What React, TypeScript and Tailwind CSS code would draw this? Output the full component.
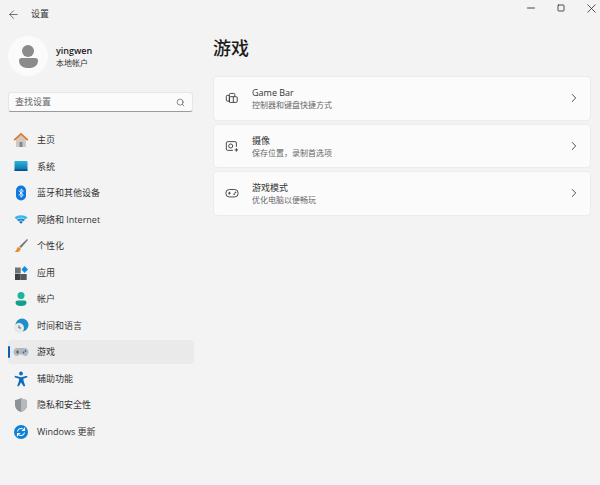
import type { ReactNode } from 'react';
import { ArrowLeft, ChevronRight, Minus, Search, Square, X } from 'lucide-react';

const font = { fontFamily: '"Open Sans", "Noto Sans CJK SC", sans-serif' };

function HomeIcon() {
  return (
    <svg width="16" height="16" viewBox="0 0 16 16">
      <path d="M3 7.5 8 3l5 4.500V15H3z" fill="#cfc9c4" />
      <rect x="6.500" y="10" width="3" height="5" fill="#8a8582" />
      <path d="M1.200 8.200 8 1.800l6.800 6.400" fill="none" stroke="#d9782d" strokeWidth="1.700" />
    </svg>
  );
}

function SystemIcon() {
  return (
    <svg width="16" height="16" viewBox="0 0 16 16">
      <defs>
        <linearGradient id="sys" x1="0" y1="0" x2="0" y2="1">
          <stop offset="0" stopColor="#2bb6d8" />
          <stop offset="1" stopColor="#0a6fb0" />
        </linearGradient>
      </defs>
      <rect x="1.500" y="3" width="13" height="9.500" rx="0.800" fill="url(#sys)" />
      <rect x="1.500" y="11.500" width="13" height="1.500" fill="#0b4f83" />
    </svg>
  );
}

function BluetoothIcon() {
  return (
    <svg width="16" height="16" viewBox="0 0 16 16">
      <rect x="3" y="0.500" width="10" height="15" rx="5" fill="#0a78e0" />
      <path d="M5.600 5.400 10.300 10 8 12.200V3.800L10.300 6 5.600 10.600" fill="none" stroke="#fff" strokeWidth="0.900" />
    </svg>
  );
}

function WifiIcon() {
  return (
    <svg width="16" height="16" viewBox="0 0 16 16">
      <path d="M1.500 6.500C5 3.400 11 3.400 14.500 6.500L12.600 8.300C10 6.200 6 6.200 3.400 8.300z" fill="#38b6e8" />
      <path d="M3.900 8.800C6.200 7 9.800 7 12.100 8.800L10.500 10.300C9 9.300 7 9.300 5.500 10.300z" fill="#1588d6" />
      <path d="M6 10.800C7.200 10 8.800 10 10 10.800L8 12.800z" fill="#0a5fb4" />
    </svg>
  );
}

function BrushIcon() {
  return (
    <svg width="16" height="16" viewBox="0 0 16 16">
      <path d="M14 1 15 2 8 10 6.300 8.400z" fill="#77797c" />
      <path d="M5.800 9c-2 .4-2 2.400-2.600 3.400-.4.700-1 1.100-1.700 1.400 2.400.8 5.400.2 6.300-3.100z" fill="#ea8a25" />
    </svg>
  );
}

function AppsIcon() {
  return (
    <svg width="16" height="16" viewBox="0 0 16 16">
      <rect x="2" y="2.500" width="5.700" height="6" fill="#6f7478" />
      <rect x="2" y="9" width="5.700" height="6" fill="#3c4044" />
      <rect x="8" y="9" width="5.700" height="6" fill="#55595d" />
      <path d="M11.500 1 15 4.500 11.500 8 8.500 4.500z" fill="#0f8fe0" />
    </svg>
  );
}

function AccountIcon() {
  return (
    <svg width="16" height="16" viewBox="0 0 16 16">
      <circle cx="8" cy="4.500" r="3.500" fill="#1fb39c" />
      <path d="M2.500 11.500c0-1.300 1-2 2-2h7c1 0 2 .7 2 2 0 2.500-2.500 3.500-5.500 3.500s-5.500-1-5.500-3.500z" fill="#14a08f" />
    </svg>
  );
}

function TimeIcon() {
  return (
    <svg width="16" height="16" viewBox="0 0 16 16">
      <circle cx="9" cy="7" r="6.500" fill="#1f8fc9" />
      <circle cx="6" cy="10" r="5" fill="#e6e8ea" />
      <path d="M6 7.500V10h2" fill="none" stroke="#4a5a68" strokeWidth="0.900" />
    </svg>
  );
}

function GameIcon() {
  return (
    <svg width="16" height="16" viewBox="0 0 16 16">
      <path d="M4 4h8c2 0 3.500 1.700 3.500 4s-1.500 4-3.500 4c-1 0-1.700-1-2.500-1.500h-3C5.700 11 5 12 4 12 2 12 .5 10.300 .5 8S2 4 4 4z" fill="#b4b8bc" />
      <path d="M3 8h3M4.500 6.500v3" stroke="#4b4f53" strokeWidth="0.900" />
      <circle cx="10.500" cy="8.500" r="0.900" fill="#2a6fc0" />
      <circle cx="12.500" cy="7" r="0.900" fill="#2a6fc0" />
    </svg>
  );
}

function AccessIcon() {
  return (
    <svg width="16" height="16" viewBox="0 0 16 16">
      <circle cx="8" cy="2.500" r="1.900" fill="#0f6cbd" />
      <path d="M2 4.800 8 6.200l6-1.400.5 1.400-4.200 1.500.5 3 1.500 4.300-1.500.5L8 11.500l-2.300 4-1.500-.5 1.500-4.300.5-3L1.500 6.200z" fill="#0f6cbd" />
    </svg>
  );
}

function ShieldIcon() {
  return (
    <svg width="16" height="16" viewBox="0 0 16 16">
      <path d="M8 1c1.800 1.200 3.800 1.800 6 2v5c0 3.400-2.400 5.800-6 7-3.600-1.200-6-3.600-6-7V3c2.200-.2 4.200-.8 6-2z" fill="#8d9297" />
      <path d="M8 1c1.800 1.200 3.800 1.800 6 2v5c0 3.400-2.400 5.800-6 7z" fill="#b5b9bd" />
    </svg>
  );
}

function UpdateIcon() {
  return (
    <svg width="16" height="16" viewBox="0 0 16 16">
      <circle cx="8" cy="8" r="7" fill="#0f80d6" />
      <path d="M4.500 7.500A3.600 3.600 0 0 1 11 6M11.500 8.500A3.600 3.600 0 0 1 5 10" fill="none" stroke="#fff" strokeWidth="1.100" />
      <path d="M11.500 3.800V6.500H8.800M4.500 12.200V9.500H7.200" fill="none" stroke="#fff" strokeWidth="1.100" />
    </svg>
  );
}

const navItems: { label: string; icon: ReactNode; active?: boolean }[] = [
  { label: '主页', icon: <HomeIcon /> },
  { label: '系统', icon: <SystemIcon /> },
  { label: '蓝牙和其他设备', icon: <BluetoothIcon /> },
  { label: '网络和 Internet', icon: <WifiIcon /> },
  { label: '个性化', icon: <BrushIcon /> },
  { label: '应用', icon: <AppsIcon /> },
  { label: '帐户', icon: <AccountIcon /> },
  { label: '时间和语言', icon: <TimeIcon /> },
  { label: '游戏', icon: <GameIcon />, active: true },
  { label: '辅助功能', icon: <AccessIcon /> },
  { label: '隐私和安全性', icon: <ShieldIcon /> },
  { label: 'Windows 更新', icon: <UpdateIcon /> },
];

function NavRow({ label, icon, active }: { label: string; icon: ReactNode; active?: boolean }) {
  return (
    <div className="h-[26.55px] flex items-center">
      <div className={`relative w-full h-[24px] flex items-center pl-[5px] rounded-[4px] ${active ? 'bg-[#eaeaea]' : ''}`}>
        {active && <div className="absolute left-0 top-[6px] w-[2px] h-[12px] rounded bg-[#0a5fb0]" />}
        <span className="w-[16px] h-[16px] shrink-0">{icon}</span>
        <span className="ml-[8px] text-[9px] text-[#333]">{label}</span>
      </div>
    </div>
  );
}

function CameraBarIcon() {
  return (
    <svg width="14" height="14" viewBox="0 0 16 16" fill="none" stroke="#333" strokeWidth="1">
      <path d="M5 11.500H2.500a1 1 0 0 1-1-1V6a1 1 0 0 1 1-1H5" />
      <path d="M5 13V4a1.200 1.200 0 0 1 1.200-1.200H10A1.200 1.200 0 0 1 11.200 4v2" />
      <rect x="5" y="6.500" width="9" height="6.500" rx="1" />
      <path d="M9.500 6.500V13" />
    </svg>
  );
}

function CaptureIcon() {
  return (
    <svg width="14" height="14" viewBox="0 0 16 16" fill="none" stroke="#333" strokeWidth="1">
      <path d="M9 13H3a1.500 1.500 0 0 1-1.500-1.500v-7A1.500 1.500 0 0 1 3 3h8.500A1.500 1.500 0 0 1 13 4.500V9" />
      <circle cx="6.500" cy="8" r="2.300" />
      <path d="M13 10.500v4M11 12.500h4" />
    </svg>
  );
}

function ControllerIcon() {
  return (
    <svg width="14" height="14" viewBox="0 0 16 16" fill="none" stroke="#333" strokeWidth="1">
      <rect x="1" y="4" width="14" height="8.500" rx="4" />
      <path d="M3.500 8.200h3M5 6.700v3" />
      <circle cx="10.500" cy="9.300" r="0.500" fill="#333" />
      <circle cx="12" cy="7.300" r="0.500" fill="#333" />
    </svg>
  );
}

const cards = [
  { title: 'Game Bar', desc: '控制器和键盘快捷方式', icon: <CameraBarIcon /> },
  { title: '摄像', desc: '保存位置，录制首选项', icon: <CaptureIcon /> },
  { title: '游戏模式', desc: '优化电脑以便畅玩', icon: <ControllerIcon /> },
];

export default function App() {
  return (
    <div className="w-[600px] h-[485px] overflow-hidden bg-[#f3f3f3] text-[#1b1b1b]" style={font}>
      {/* Title bar */}
      <div className="h-[28px] flex items-center justify-between">
        <div className="flex items-center pl-[6.600px]">
          <ArrowLeft size={13} strokeWidth={1.500} className="text-[#555]" />
          <span className="ml-[11.400px] text-[9px] text-[#333]">设置</span>
        </div>
        <div className="flex items-center self-start h-[16px] pr-[1px]">
          <Minus size={12} strokeWidth={1.800} className="text-[#333]" />
          <Square size={8} strokeWidth={2.600} className="ml-[20px] text-[#333]" />
          <X size={15} strokeWidth={1.300} className="ml-[19px] text-[#333]" />
        </div>
      </div>

      <div className="flex">
        {/* Sidebar */}
        <aside className="w-[213px] pl-[8px] pr-[6px] shrink-0 flex flex-col">
          <div className="flex items-center h-[40px] mt-[8px]">
            <div className="w-[40px] h-[40px] rounded-full bg-[#fbfbfb] flex flex-col items-center justify-center">
              <div className="w-[12px] h-[12px] rounded-full bg-[#8b8b8b]" />
              <div className="w-[19px] h-[10px] mt-[1px] rounded-b-[8px] rounded-t-[3px] bg-[#8b8b8b]" />
            </div>
            <div className="ml-[8px] flex flex-col">
              <span className="text-[9px] leading-[12px] font-semibold text-[#1b1b1b]">yingwen</span>
              <span className="text-[8px] leading-[11px] text-[#333]">本地帐户</span>
            </div>
          </div>
          <div className="mt-[16px] h-[20px] w-[185px] rounded-[3px] bg-[#fbfbfb] border border-[#e6e6e6] border-b-[#9a9a9a] flex items-center justify-between pl-[6px] pr-[7px]">
            <span className="text-[9px] text-[#666]">查找设置</span>
            <Search size={9} strokeWidth={1.800} className="text-[#555]" />
          </div>
          <nav className="mt-[14.500px] w-[186px]">
            {navItems.map((item) => (
              <NavRow key={item.label} {...item} />
            ))}
          </nav>
        </aside>

        {/* Main */}
        <main className="flex-1 pr-[9px]">
          <h1 className="text-[18px] leading-[24px] mt-[8px] font-medium text-[#1b1b1b]">游戏</h1>
          <div className="mt-[16px] flex flex-col gap-[3px]">
            {cards.map((card) => (
              <div
                key={card.title}
                className="h-[44.500px] rounded-[4px] bg-[#fbfbfb] border border-[#ececec] flex items-center pl-[11px] pr-[8.700px]"
              >
                <span className="w-[14px] h-[14px] shrink-0">{card.icon}</span>
                <div className="ml-[13px] pt-[1px] flex-1 flex flex-col">
                  <span className="text-[9px] leading-[12px] text-[#333]">{card.title}</span>
                  <span className="text-[8px] leading-[11px] text-[#666]">{card.desc}</span>
                </div>
                <ChevronRight size={14} strokeWidth={1.600} className="text-[#444]" />
              </div>
            ))}
          </div>
        </main>
      </div>
    </div>
  );
}
